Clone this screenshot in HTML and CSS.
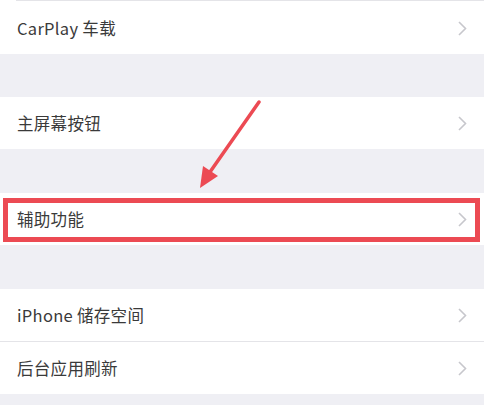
FILE: index.html
```html
<!DOCTYPE html>
<html lang="zh-CN">
<head>
  <meta charset="UTF-8">
  <meta name="viewport" content="width=device-width, initial-scale=1.0">
  <title>通用</title>
  <link rel="stylesheet" href="styles.css">
</head>
<body>
  <div class="settings">
    <div class="group group-top">
      <div class="row">
        <span class="label">CarPlay 车载</span>
        <svg class="chevron" viewBox="0 0 9 15"><path d="M1 1l6.5 6.5L1 14"/></svg>
      </div>
    </div>

    <div class="group group-second">
      <div class="row">
        <span class="label">主屏幕按钮</span>
        <svg class="chevron" viewBox="0 0 9 15"><path d="M1 1l6.5 6.5L1 14"/></svg>
      </div>
    </div>

    <div class="group">
      <div class="row highlighted">
        <span class="label">辅助功能</span>
        <svg class="chevron" viewBox="0 0 9 15"><path d="M1 1l6.5 6.5L1 14"/></svg>
        <div class="mark-box"></div>
      </div>
    </div>

    <div class="group">
      <div class="row">
        <span class="label">iPhone 储存空间</span>
        <svg class="chevron" viewBox="0 0 9 15"><path d="M1 1l6.5 6.5L1 14"/></svg>
      </div>
      <div class="row">
        <span class="label">后台应用刷新</span>
        <svg class="chevron" viewBox="0 0 9 15"><path d="M1 1l6.5 6.5L1 14"/></svg>
      </div>
    </div>

    <!-- 标注箭头 -->
    <svg class="mark-arrow" viewBox="0 0 70 90">
      <path class="shaft" d="M63 2L14 72"/>
      <path class="head" d="M4 88L7 66L22 76Z"/>
    </svg>
  </div>
</body>
</html>
```

FILE: styles.css
```css
body {
  margin: 0;
  background-color: #efeff4;
  font-family: "Noto Sans CJK SC", "Noto Sans", sans-serif;
  color: #3a3a3a;
}

.settings {
  position: relative;
  height: 405px;
  overflow: hidden;
}

.group {
  background-color: #ffffff;
  margin-top: 44px;
}

.group-top {
  margin-top: 0;
  padding-top: 2px;
  position: relative;
}

.group-second {
  margin-top: 43px;
}

.group-top::before {
  content: "";
  position: absolute;
  top: 0;
  left: 16px;
  right: 0;
  height: 1px;
  background-color: #e4e4e8;
}

.row {
  position: relative;
  height: 52px;
  display: flex;
  align-items: center;
  justify-content: space-between;
  padding: 0 17px 0 17px;
}

.row + .row {
  border-top: 1px solid #e4e4e8;
}

.label {
  font-size: 16.5px;
  letter-spacing: 0.3px;
}

.chevron {
  width: 9px;
  height: 15px;
  fill: none;
  stroke: #c7c7cc;
  stroke-width: 1.6;
}

.mark-box {
  position: absolute;
  top: 5px;
  left: 3px;
  right: 4px;
  bottom: 3px;
  border: 5px solid #ec4a53;
}

.mark-arrow {
  position: absolute;
  left: 196px;
  top: 100px;
  width: 70px;
  height: 90px;
}

.mark-arrow .shaft {
  stroke: #ec4a53;
  stroke-width: 3.5;
  stroke-linecap: round;
  fill: none;
}

.mark-arrow .head {
  fill: #ec4a53;
}
```
